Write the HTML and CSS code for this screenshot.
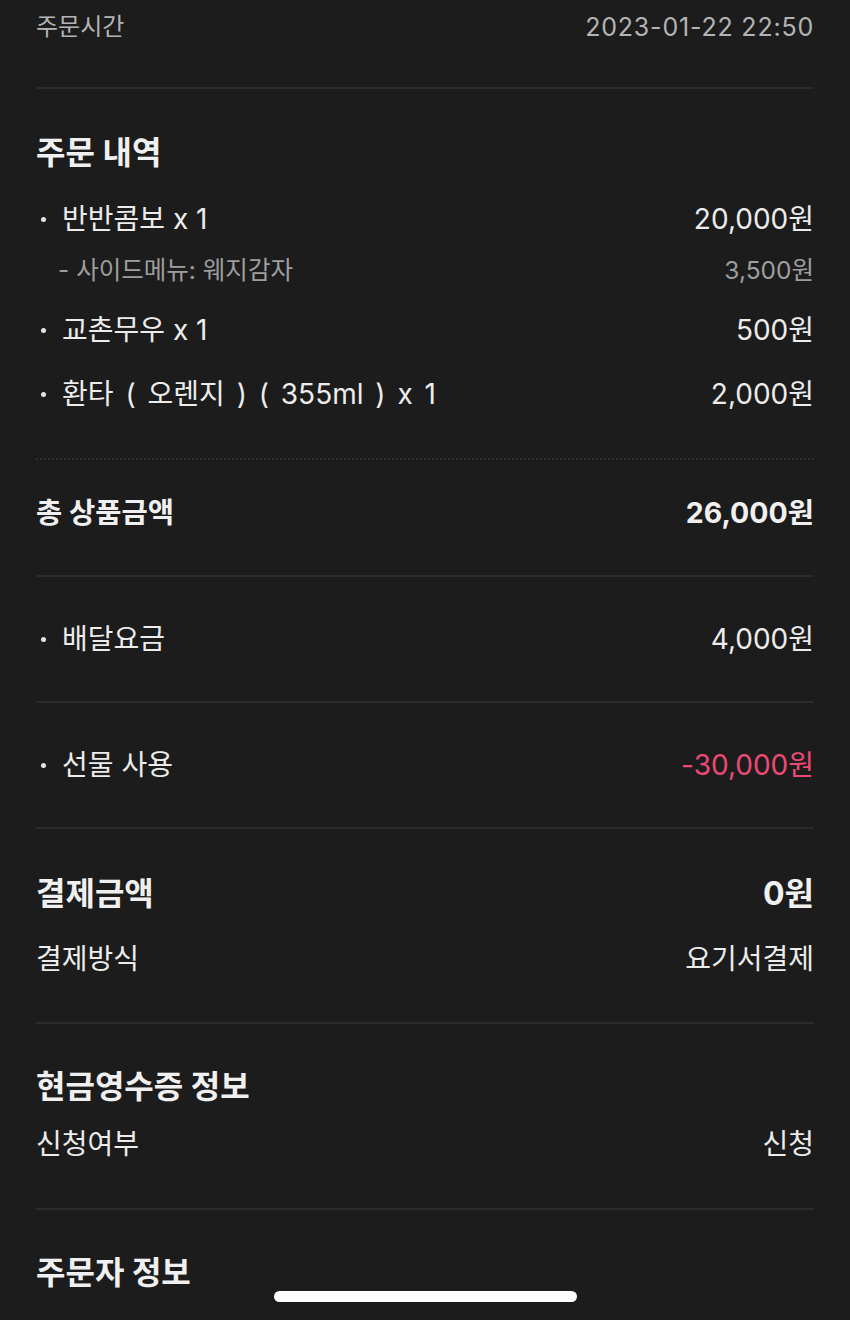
FILE: index.html
```html
<!DOCTYPE html>
<html lang="ko">
<head>
<meta charset="utf-8">
<title>주문 상세</title>
<link rel="stylesheet" href="styles.css">
</head>
<body>
<div class="page">
  <section class="sec sec-meta">
    <div class="row meta"><span>주문시간</span><span class="date">2023-01-22 22:50</span></div>
  </section>

  <section class="sec sec-items dotted">
    <h2 class="title">주문 내역</h2>
    <div class="row item"><span><i class="dot"></i>반반콤보 x 1</span><span>20,000원</span></div>
    <div class="row sub"><span>- 사이드메뉴: 웨지감자</span><span>3,500원</span></div>
    <div class="row item gap"><span><i class="dot"></i>교촌무우 x 1</span><span>500원</span></div>
    <div class="row item gap"><span class="wide"><i class="dot"></i>환타 ( 오렌지 ) ( 355ml ) x 1</span><span>2,000원</span></div>
  </section>

  <section class="sec sec-total">
    <div class="row total"><span>총 상품금액</span><span>26,000원</span></div>
  </section>

  <section class="sec sec-single">
    <div class="row item"><span><i class="dot"></i>배달요금</span><span>4,000원</span></div>
  </section>

  <section class="sec sec-single">
    <div class="row item"><span><i class="dot"></i>선물 사용</span><span class="neg">-30,000원</span></div>
  </section>

  <section class="sec sec-pay">
    <div class="row title-row"><span>결제금액</span><span>0원</span></div>
    <div class="row item pay-method"><span>결제방식</span><span>요기서결제</span></div>
  </section>

  <section class="sec sec-receipt">
    <h2 class="title">현금영수증 정보</h2>
    <div class="row item receipt-row"><span>신청여부</span><span>신청</span></div>
  </section>

  <section class="sec sec-last">
    <h2 class="title">주문자 정보</h2>
  </section>
</div>
<div class="home-indicator"></div>
</body>
</html>
```

FILE: styles.css
```css
html, body {
  margin: 0;
  padding: 0;
  background: #1c1c1c;
}

body {
  font-family: Inter, "Noto Sans CJK KR", sans-serif;
  color: #ececec;
  height: 1320px;
  overflow: hidden;
}

.page {
  padding: 0 36px;
}

.sec {
  border-bottom: 2px solid #2b2b2b;
}

.sec.dotted {
  border-bottom: 2px dotted #2f2f2f;
}

.row {
  display: flex;
  justify-content: space-between;
  align-items: center;
  white-space: nowrap;
}

.title {
  margin: 0;
  font-size: 32px;
  font-weight: 700;
  line-height: 44px;
  color: #f0f0f0;
}

.sec-meta {
  padding: 8px 0 41px;
}

.meta {
  font-size: 24px;
  line-height: 38px;
  color: #b4b4b4;
}

.date {
  font-size: 25px;
  letter-spacing: 0.8px;
}

.sec-items {
  padding: 42px 0 44px;
}

.item {
  font-size: 28px;
  line-height: 40px;
  color: #ececec;
}

.wide {
  word-spacing: 4px;
}

.sec-items .title + .item {
  margin-top: 24px;
}

.item.gap {
  margin-top: 24px;
}

.sub {
  margin-top: 15px;
  font-size: 24.5px;
  line-height: 32px;
  color: #9e9e9e;
  padding-left: 22px;
}

.dot {
  display: inline-block;
  width: 5px;
  height: 5px;
  border-radius: 50%;
  background: #e6e6e6;
  margin: 0 16px 0 5px;
  vertical-align: middle;
  position: relative;
  top: -2px;
}

.sec-total {
  padding: 33px 0 42px;
}

.total {
  font-size: 28.5px;
  font-weight: 700;
  line-height: 40px;
  color: #f0f0f0;
}

.sec-single {
  padding: 42px 0 42px;
}

.neg {
  color: #ec4a75;
}

.sec-pay {
  padding: 43px 0 43px;
}

.title-row {
  font-size: 32px;
  font-weight: 700;
  line-height: 44px;
  color: #f0f0f0;
}

.pay-method {
  margin-top: 23px;
}

.sec-receipt {
  padding: 41px 0 44px;
}

.receipt-row {
  margin-top: 15px;
}

.sec-last {
  border-bottom: none;
  padding: 41px 0 0;
}

.home-indicator {
  position: absolute;
  left: 274px;
  top: 1291px;
  width: 303px;
  height: 11px;
  border-radius: 6px;
  background: #ffffff;
}
```
